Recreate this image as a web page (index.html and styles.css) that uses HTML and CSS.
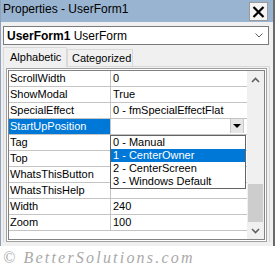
FILE: index.html
```html
<!DOCTYPE html>
<html lang="en">

<head>
  <meta charset="UTF-8" />
  <meta name="viewport" content="width=device-width, initial-scale=1.0" />
  <title>Properties - UserForm1</title>
  <link rel="stylesheet" href="styles.css">
</head>

<body>
  <div class="window">
    <div class="titlebar">
      <span class="title">Properties - UserForm1</span>
      <span class="close">
        <svg width="13" height="12" viewBox="0 0 13 12">
          <path d="M1.5 1 L11.5 11 M11.5 1 L1.5 11" stroke="#000" stroke-width="2.2" fill="none" />
        </svg>
      </span>
    </div>

    <div class="object-box">
      <span><b>UserForm1</b> UserForm</span>
      <svg width="8" height="5" viewBox="0 0 8 5">
        <path d="M0.5 0.5 L4 4 L7.5 0.5" stroke="#606060" stroke-width="1" fill="none" />
      </svg>
    </div>

    <div class="tabs">
      <span class="tab active">Alphabetic</span>
      <span class="tab">Categorized</span>
    </div>

    <div class="panel">
      <div class="grid">
        <div class="rows">
          <div class="row"><span class="name">ScrollWidth</span><span class="value">0</span></div>
          <div class="row"><span class="name">ShowModal</span><span class="value">True</span></div>
          <div class="row"><span class="name">SpecialEffect</span><span class="value">0 - fmSpecialEffectFlat</span></div>
          <div class="row selected">
            <span class="name">StartUpPosition</span>
            <span class="value combo">
              <span class="drop-btn"><span class="arrow"></span></span>
              <ul class="dropdown">
                <li>0 - Manual</li>
                <li class="current">1 - CenterOwner</li>
                <li>2 - CenterScreen</li>
                <li>3 - Windows Default</li>
              </ul>
            </span>
          </div>
          <div class="row"><span class="name">Tag</span><span class="value"></span></div>
          <div class="row"><span class="name">Top</span><span class="value"></span></div>
          <div class="row"><span class="name">WhatsThisButton</span><span class="value"></span></div>
          <div class="row"><span class="name">WhatsThisHelp</span><span class="value"></span></div>
          <div class="row"><span class="name">Width</span><span class="value">240</span></div>
          <div class="row"><span class="name">Zoom</span><span class="value">100</span></div>
        </div>
        <div class="scrollbar">
          <span class="scroll-btn">
            <svg width="9" height="6" viewBox="0 0 9 6">
              <path d="M1 5 L4.5 1.5 L8 5" stroke="#606060" stroke-width="1.6" fill="none" />
            </svg>
          </span>
          <div class="track"><div class="thumb"></div></div>
          <span class="scroll-btn">
            <svg width="9" height="6" viewBox="0 0 9 6">
              <path d="M1 1 L4.5 4.5 L8 1" stroke="#606060" stroke-width="1.6" fill="none" />
            </svg>
          </span>
        </div>
      </div>
    </div>
  </div>

  <div class="credit">© BetterSolutions.com</div>
</body>

</html>
```

FILE: styles.css
```css
body {
  margin: 0;
  background: #fff;
  font-family: "Liberation Sans", Arial, sans-serif;
  font-size: 11px;
  color: #000;
}

.window {
  width: 275px;
  height: 246px;
  box-sizing: border-box;
  background: #f0f0f0;
  border-left: 1px solid #8ea3bb;
  border-right: 2px solid #6a6a6a;
}

.titlebar {
  height: 22px;
  background: #99b4d1;
  display: flex;
  justify-content: space-between;
  align-items: flex-start;
}

.title {
  font-size: 12px;
  line-height: 17px;
  padding-left: 2px;
  padding-top: 1px;
}

.close {
  width: 17px;
  height: 17px;
  margin: 2px 5px 0 0;
  background: #f4f4f4;
  border: 1px solid #9a9a9a;
  display: flex;
  align-items: center;
  justify-content: center;
}

.object-box {
  margin: 4px 0 0 2px;
  width: 266px;
  height: 19px;
  box-sizing: border-box;
  background: #fff;
  border: 1px solid #7a7a7a;
  display: flex;
  align-items: center;
  justify-content: space-between;
  padding: 0 5px 0 3px;
  font-size: 12px;
}

.tabs {
  margin: 2px 0 0 2px;
  height: 19px;
  display: flex;
  align-items: flex-end;
}

.tab {
  box-sizing: border-box;
  border: 1px solid #d9d9d9;
  border-bottom: none;
  background: #f0f0f0;
  width: 66px;
  height: 17px;
  line-height: 16px;
  padding-left: 4px;
}

.tab.active {
  position: relative;
  width: 64px;
  height: 20px;
  margin-bottom: -1px;
  line-height: 18px;
  padding-left: 6px;
}

.panel {
  margin-left: 2px;
  width: 267px;
  box-sizing: border-box;
  border: 1px solid #d9d9d9;
  border-bottom: none;
  padding: 1px 2px 0;
}

.grid {
  display: flex;
  height: 174px;
  box-sizing: border-box;
  border: 1px solid #a0a0a0;
  padding: 1px;
  background: #fff;
}

.rows {
  flex: 1;
  border: 1px solid #828282;
  border-right: none;
  background: #fff;
}

.row {
  display: grid;
  grid-template-columns: 102px 1fr;
  height: 16px;
  box-sizing: border-box;
  border-bottom: 1px solid #c4c4c4;
  line-height: 15px;
}

.name {
  border-right: 1px solid #c4c4c4;
  padding-left: 1px;
  white-space: nowrap;
}

.value {
  padding-left: 2px;
  white-space: nowrap;
}

.row.selected .name {
  background: #0078d7;
  color: #fff;
}

.combo {
  position: relative;
}

.drop-btn {
  position: absolute;
  right: 3px;
  top: 0;
  width: 14px;
  height: 14px;
  box-sizing: border-box;
  background: #e6e6e6;
  border-left: 1px solid #c8c8c8;
  border-right: 1px solid #c8c8c8;
  display: flex;
  align-items: center;
  justify-content: center;
}

.arrow {
  width: 0;
  height: 0;
  border-left: 4px solid transparent;
  border-right: 4px solid transparent;
  border-top: 4px solid #000;
}

.dropdown {
  position: absolute;
  z-index: 2;
  left: -1px;
  top: 16px;
  width: 136px;
  margin: 0;
  padding: 0;
  list-style: none;
  box-sizing: border-box;
  background: #fff;
  border: 1px solid #646464;
}

.dropdown li {
  height: 13px;
  line-height: 13px;
  padding-left: 2px;
}

.dropdown li.current {
  background: #0078d7;
  color: #fff;
}

.scrollbar {
  width: 17px;
  display: flex;
  flex-direction: column;
  background: #f0f0f0;
  border: 1px solid #828282;
  border-left: none;
}

.scroll-btn {
  height: 17px;
  display: flex;
  align-items: center;
  justify-content: center;
}

.track {
  flex: 1;
  display: flex;
  flex-direction: column;
  justify-content: flex-end;
}

.thumb {
  height: 38px;
  margin: 0 1px;
  background: #cdcdcd;
}

.credit {
  margin-top: 3px;
  padding-left: 3px;
  font-family: "Liberation Serif", serif;
  font-style: italic;
  font-size: 16px;
  letter-spacing: 2.2px;
  color: #a9a9a9;
}
```
